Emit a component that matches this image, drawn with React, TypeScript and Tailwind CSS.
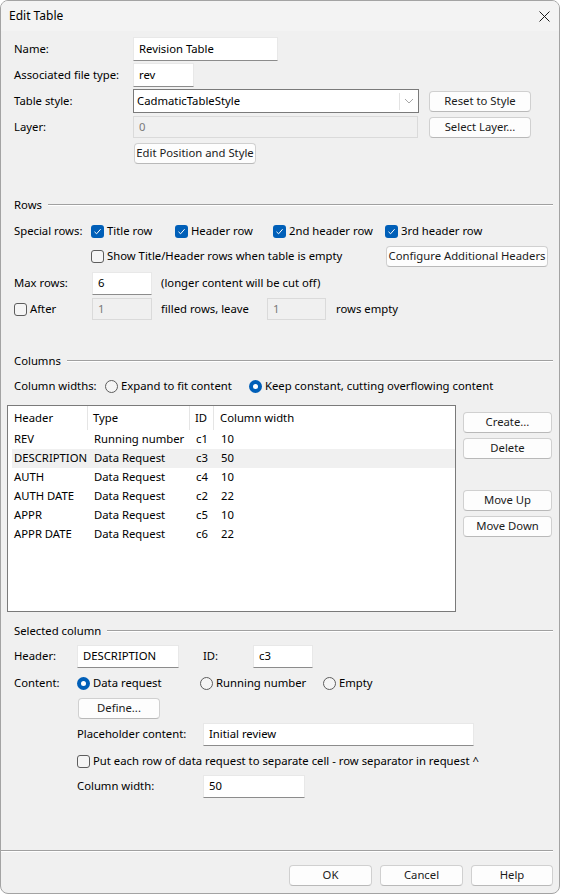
import type { ReactNode } from "react";

function Btn({ children, className = "" }: { children: ReactNode; className?: string }) {
  return (
    <div
      className={`flex h-[21px] items-center justify-center rounded-[4px] border border-[#d0d0d0] border-b-[#b9b9b9] bg-[#fdfdfd] text-[#1b1b1b] ${className}`}
    >
      {children}
    </div>
  );
}

function TextBox({
  value,
  className = "",
  disabled = false,
}: {
  value: string;
  className?: string;
  disabled?: boolean;
}) {
  if (disabled) {
    return (
      <div
        className={`flex h-[22px] items-center border border-[#dadada] bg-[#f0f0f0] pl-[5px] text-[#7a7a7a] ${className}`}
      >
        {value}
      </div>
    );
  }
  return (
    <div
      className={`flex h-[23px] items-center border border-[#e8e8e8] border-b-[#8c8c8c] bg-white pl-[5px] text-black ${className}`}
    >
      {value}
    </div>
  );
}

function Check({ checked = false }: { checked?: boolean }) {
  if (checked) {
    return (
      <span className="flex h-[13px] w-[13px] shrink-0 items-center justify-center rounded-[3px] bg-[#005fb8]">
        <svg width="9" height="9" viewBox="0 0 9 9" fill="none">
          <path d="M1.5 4.8 L3.6 6.8 L7.6 2.2" stroke="white" strokeWidth="1" />
        </svg>
      </span>
    );
  }
  return <span className="h-[13px] w-[13px] shrink-0 rounded-[3px] border border-[#5d5d5d] bg-[#f5f5f5]" />;
}

function Radio({ checked = false }: { checked?: boolean }) {
  if (checked) {
    return (
      <span className="flex h-[13px] w-[13px] shrink-0 items-center justify-center rounded-full bg-[#005fb8]">
        <span className="h-[5px] w-[5px] rounded-full bg-white" />
      </span>
    );
  }
  return <span className="h-[13px] w-[13px] shrink-0 rounded-full border border-[#5d5d5d] bg-[#f5f5f5]" />;
}

function Group({ title, className = "" }: { title: string; className?: string }) {
  return (
    <div className={`flex h-[16px] items-center pl-[13px] pr-[6px] ${className}`}>
      <span>{title}</span>
      <div className="ml-[6px] flex-1 border-t border-b border-t-[#a0a0a0] border-b-white" />
    </div>
  );
}

const COLUMNS = [
  { header: "REV", type: "Running number", id: "c1", width: "10" },
  { header: "DESCRIPTION", type: "Data Request", id: "c3", width: "50" },
  { header: "AUTH", type: "Data Request", id: "c4", width: "10" },
  { header: "AUTH DATE", type: "Data Request", id: "c2", width: "22" },
  { header: "APPR", type: "Data Request", id: "c5", width: "10" },
  { header: "APPR DATE", type: "Data Request", id: "c6", width: "22" },
];

export default function App() {
  return (
    <div className="h-[894px] w-[561px] bg-white font-['Noto_Sans',sans-serif] text-[11.3px] text-black">
      <div className="flex h-[894px] w-[560px] flex-col overflow-hidden rounded-[8px] border border-[#a3a3a3] bg-[#f0f0f0]">
        {/* title bar */}
        <div className="flex h-[30px] shrink-0 items-center justify-between bg-[#f3f3f3] pl-[8px] pr-[9px]">
          <span className="text-[12px]">Edit Table</span>
          <svg width="11" height="11" viewBox="0 0 11 11">
            <path d="M0.5 0.5 L10.5 10.5 M10.5 0.5 L0.5 10.5" stroke="#1a1a1a" strokeWidth="1" />
          </svg>
        </div>

        <div className="flex flex-1 flex-col">
          {/* general */}
          <div className="mt-[6px] flex h-[24px] items-center pl-[13px]">
            <span className="w-[119px]">Name:</span>
            <TextBox value="Revision Table" className="h-[24px] w-[145px]" />
          </div>
          <div className="mt-[2px] flex h-[24px] items-center pl-[13px]">
            <span className="w-[119px]">Associated file type:</span>
            <TextBox value="rev" className="h-[24px] w-[61px]" />
          </div>
          <div className="mt-[2px] flex h-[24px] items-center pl-[13px]">
            <span className="w-[119px]">Table style:</span>
            <div className="flex h-[24px] w-[286px] items-center border border-[#7a7a7a] bg-white pl-[3px]">
              <span className="flex-1">CadmaticTableStyle</span>
              <div className="h-[17px] border-l border-[#e3e3e3]" />
              <svg width="16" height="10" viewBox="0 0 16 10" className="mx-[1px]">
                <path d="M4 3 L8 7 L12 3" stroke="#a8a8a8" strokeWidth="1" fill="none" />
              </svg>
            </div>
            <Btn className="ml-[10px] w-[102px]">Reset to Style</Btn>
          </div>
          <div className="mt-[3px] flex h-[22px] items-center pl-[13px]">
            <span className="w-[119px]">Layer:</span>
            <TextBox value="0" disabled className="w-[285px]" />
            <Btn className="ml-[11px] w-[102px]">Select Layer...</Btn>
          </div>
          <div className="mt-[5px] pl-[133px]">
            <Btn className="w-[122px]">Edit Position and Style</Btn>
          </div>

          {/* rows */}
          <Group title="Rows" className="mt-[33px]" />
          <div className="mt-[8px] flex h-[20px] items-center pl-[13px]">
            <span className="w-[77px]">Special rows:</span>
            <label className="flex w-[84px] items-center gap-[3px]">
              <Check checked />
              Title row
            </label>
            <label className="flex w-[98px] items-center gap-[3px]">
              <Check checked />
              Header row
            </label>
            <label className="flex w-[112px] items-center gap-[3px]">
              <Check checked />
              2nd header row
            </label>
            <label className="flex items-center gap-[3px]">
              <Check checked />
              3rd header row
            </label>
          </div>
          <div className="mt-[5px] flex h-[21px] items-center pl-[90px]">
            <label className="flex w-[295px] items-center gap-[3px]">
              <Check />
              Show Title/Header rows when table is empty
            </label>
            <Btn className="w-[162px]">Configure Additional Headers</Btn>
          </div>
          <div className="mt-[5px] flex h-[23px] items-center pl-[13px]">
            <span className="w-[78px]">Max rows:</span>
            <TextBox value="6" className="w-[60px]" />
            <span className="ml-[9px]">(longer content will be cut off)</span>
          </div>
          <div className="mt-[3px] flex h-[22px] items-center pl-[13px]">
            <label className="flex w-[78px] items-center gap-[3px]">
              <Check />
              After
            </label>
            <TextBox value="1" disabled className="w-[60px]" />
            <span className="ml-[9px] w-[106px]">filled rows, leave</span>
            <TextBox value="1" disabled className="w-[59px]" />
            <span className="ml-[10px]">rows empty</span>
          </div>

          {/* columns */}
          <Group title="Columns" className="mt-[33px]" />
          <div className="mt-[7px] flex h-[20px] items-center pl-[13px]">
            <span className="w-[91px]">Column widths:</span>
            <label className="flex w-[144px] items-center gap-[3px]">
              <Radio />
              Expand to fit content
            </label>
            <label className="flex items-center gap-[3px]">
              <Radio checked />
              Keep constant, cutting overflowing content
            </label>
          </div>
          <div className="mt-[9px] flex pl-[6px]">
            <div className="h-[207px] w-[449px] border border-[#7a7a7a] bg-white">
              <div className="flex h-[24px] items-center">
                <div className="flex h-[24px] w-[80px] items-center border-r border-[#e5e5e5] pl-[6px]">Header</div>
                <div className="flex h-[24px] w-[102px] items-center border-r border-[#e5e5e5] pl-[5px]">Type</div>
                <div className="flex h-[24px] w-[24px] items-center border-r border-[#e5e5e5] pl-[5px]">ID</div>
                <div className="flex h-[24px] items-center pl-[6px]">Column width</div>
              </div>
              {COLUMNS.map((c) => (
                <div
                  key={c.id}
                  className={`ml-[4px] flex h-[19px] items-center ${c.id === "c3" ? "bg-[#f0f0f0]" : ""}`}
                >
                  <span className="w-[82px] pl-[2px]">{c.header}</span>
                  <span className="w-[102px]">{c.type}</span>
                  <span className="w-[25px]">{c.id}</span>
                  <span>{c.width}</span>
                </div>
              ))}
            </div>
            <div className="ml-[7px] flex w-[89px] flex-col pt-[7px]">
              <Btn>Create...</Btn>
              <Btn className="mt-[5px]">Delete</Btn>
              <Btn className="mt-[31px]">Move Up</Btn>
              <Btn className="mt-[5px]">Move Down</Btn>
            </div>
          </div>

          {/* selected column */}
          <Group title="Selected column" className="mt-[11px]" />
          <div className="mt-[6px] flex h-[23px] items-center pl-[13px]">
            <span className="w-[63px]">Header:</span>
            <TextBox value="DESCRIPTION" className="w-[102px]" />
            <span className="ml-[24px] w-[50px]">ID:</span>
            <TextBox value="c3" className="w-[60px]" />
          </div>
          <div className="mt-[5px] flex h-[20px] items-center pl-[13px]">
            <span className="w-[63px]">Content:</span>
            <label className="flex w-[123px] items-center gap-[3px]">
              <Radio checked />
              Data request
            </label>
            <label className="flex w-[123px] items-center gap-[3px]">
              <Radio />
              Running number
            </label>
            <label className="flex items-center gap-[3px]">
              <Radio />
              Empty
            </label>
          </div>
          <div className="mt-[5px] pl-[77px]">
            <Btn className="w-[82px]">Define...</Btn>
          </div>
          <div className="mt-[4px] flex h-[23px] items-center pl-[76px]">
            <span className="w-[126px]">Placeholder content:</span>
            <TextBox value="Initial review" className="w-[271px]" />
          </div>
          <div className="mt-[5px] flex h-[20px] items-center pl-[76px]">
            <label className="flex items-center gap-[3px]">
              <Check />
              Put each row of data request to separate cell - row separator in request ^
            </label>
          </div>
          <div className="mt-[4px] flex h-[23px] items-center pl-[76px]">
            <span className="w-[126px]">Column width:</span>
            <TextBox value="50" className="w-[102px]" />
          </div>
        </div>

        {/* footer */}
        <div className="mr-[6px] border-t border-b border-t-[#a0a0a0] border-b-white" />
        <div className="flex justify-end gap-[8px] pb-[7px] pr-[6px] pt-[13px]">
          <Btn className="w-[83px] border-[#005fb8] border-b-[#005fb8]">OK</Btn>
          <Btn className="w-[83px]">Cancel</Btn>
          <Btn className="w-[82px]">Help</Btn>
        </div>
      </div>
    </div>
  );
}
